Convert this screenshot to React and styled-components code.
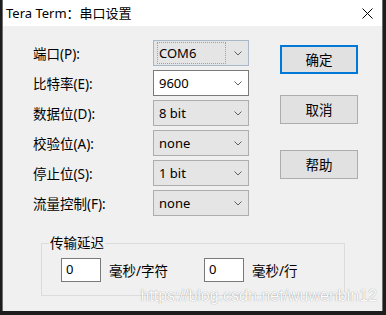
import styled, { createGlobalStyle } from "styled-components";

const Global = createGlobalStyle`
  html, body {
    margin: 0;
    padding: 0;
    background: #1d1d1d;
    width: 386px;
    height: 315px;
    overflow: hidden;
  }
  body {
    font-family: "Noto Sans", "Noto Sans CJK SC", sans-serif;
  }
`;

const ui = `"Noto Sans", "Noto Sans CJK SC", sans-serif`;

const Window = styled.div`
  position: relative;
  margin-left: 2px;
  width: 381px;
  height: 311px;
  box-sizing: border-box;
  background: #f0f0f0;
  border-left: 1px solid #6e6e6e;
  border-right: 1px solid #6e6e6e;
  display: flex;
  flex-direction: column;
`;

const TitleBar = styled.div`
  height: 26px;
  background: #fff;
  display: flex;
  align-items: center;
  justify-content: space-between;
  padding: 0 9px 0 3px;
  font: 13px/16px ${ui};
  color: #000;
`;

const Main = styled.div`
  display: flex;
  padding: 14px 0 0 30px;
`;

const Form = styled.div`
  display: grid;
  grid-template-columns: 120px 96px;
  grid-auto-rows: 26px;
  row-gap: 4px;
  align-items: center;
`;

const Label = styled.div`
  font: 13.5px/16px ${ui};
  color: #000;
  padding-top: 2px;
`;

const Combo = styled.div`
  height: 26px;
  box-sizing: border-box;
  display: flex;
  align-items: center;
  justify-content: space-between;
  padding: 0 6px 0 3px;
  font: 13px/16px ${ui};
  color: #000;
  background: ${(p) => (p.$edit ? "#fff" : "#e5e5e5")};
  border: 1px solid
    ${(p) => (p.$edit ? "#7a7a7a" : p.$focus ? "#a9b8c6" : "#adadad")};
`;

const ComboValue = styled.span`
  flex: 1;
  padding: 2px 0 2px 1px;
  margin-right: 8px;
  border: 1px dotted ${(p) => (p.$focus ? "#a0a0a0" : "transparent")};
`;

const Buttons = styled.div`
  display: flex;
  flex-direction: column;
  margin: 5px 0 0 31px;
`;

const Button = styled.div`
  width: 78px;
  height: 29px;
  box-sizing: border-box;
  margin-bottom: ${(p) => p.$gap || 0}px;
  display: flex;
  align-items: center;
  justify-content: center;
  background: #e1e1e1;
  border: ${(p) => (p.$default ? "2px solid #0078d7" : "1px solid #adadad")};
  font: 13.5px/16px ${ui};
  color: #000;
`;

const Group = styled.fieldset`
  margin: 19px 0 0 38px;
  width: 304px;
  box-sizing: border-box;
  border: 1px solid #dcdcdc;
  padding: 7px 0 13px 7px;
  display: flex;
  align-items: center;
`;

const Legend = styled.legend`
  font: 13.5px/16px ${ui};
  color: #000;
  padding: 0 1px;
`;

const Field = styled.div`
  width: 40px;
  height: 24px;
  box-sizing: border-box;
  margin-left: ${(p) => p.$lead || 0}px;
  background: #fff;
  border: 1px solid #7a7a7a;
  padding: 2px 0 0 4px;
  font: 13px/16px ${ui};
  color: #000;
`;

const Unit = styled.span`
  font: 13.5px/16px ${ui};
  color: #000;
  margin: 0 ${(p) => p.$after || 0}px 0 8px;
  padding-top: 2px;
`;

const Watermark = styled.div`
  position: absolute;
  right: 5px;
  bottom: 7px;
  font: 16px/16px "Liberation Sans", Arial, sans-serif;
  color: #fcfcfc;
  text-shadow: 0 0 1px rgba(0, 0, 0, 0.45);
  white-space: nowrap;
`;

const Chevron = () => (
  <svg width="8" height="5" viewBox="0 0 8 5">
    <polyline points="0.5,0.5 4,4 7.5,0.5" fill="none" stroke="#606060" strokeWidth="1" />
  </svg>
);

const Close = () => (
  <svg width="11" height="11" viewBox="0 0 11 11">
    <path d="M0.5 0.5 L10.5 10.5 M10.5 0.5 L0.5 10.5" stroke="#000" strokeWidth="1" />
  </svg>
);

const rows = [
  { label: "端口(P):", value: "COM6", focus: true },
  { label: "比特率(E):", value: "9600", edit: true },
  { label: "数据位(D):", value: "8 bit" },
  { label: "校验位(A):", value: "none" },
  { label: "停止位(S):", value: "1 bit" },
  { label: "流量控制(F):", value: "none" },
];

export default function App() {
  return (
    <>
      <Global />
      <Window>
        <TitleBar>
          <span>Tera Term：串口设置</span>
          <Close />
        </TitleBar>
        <Main>
          <Form>
            {rows.map((r) => [
              <Label key={r.label}>{r.label}</Label>,
              <Combo key={r.label + "-c"} $edit={r.edit} $focus={r.focus}>
                <ComboValue $focus={r.focus}>{r.value}</ComboValue>
                <Chevron />
              </Combo>,
            ])}
          </Form>
          <Buttons>
            <Button $default $gap={21}>确定</Button>
            <Button $gap={26}>取消</Button>
            <Button>帮助</Button>
          </Buttons>
        </Main>
        <Group>
          <Legend>传输延迟</Legend>
          <Field $lead={12}>0</Field>
          <Unit $after={36}>毫秒/字符</Unit>
          <Field>0</Field>
          <Unit>毫秒/行</Unit>
        </Group>
        <Watermark>https://blog.csdn.net/wuwenbin12</Watermark>
      </Window>
    </>
  );
}
